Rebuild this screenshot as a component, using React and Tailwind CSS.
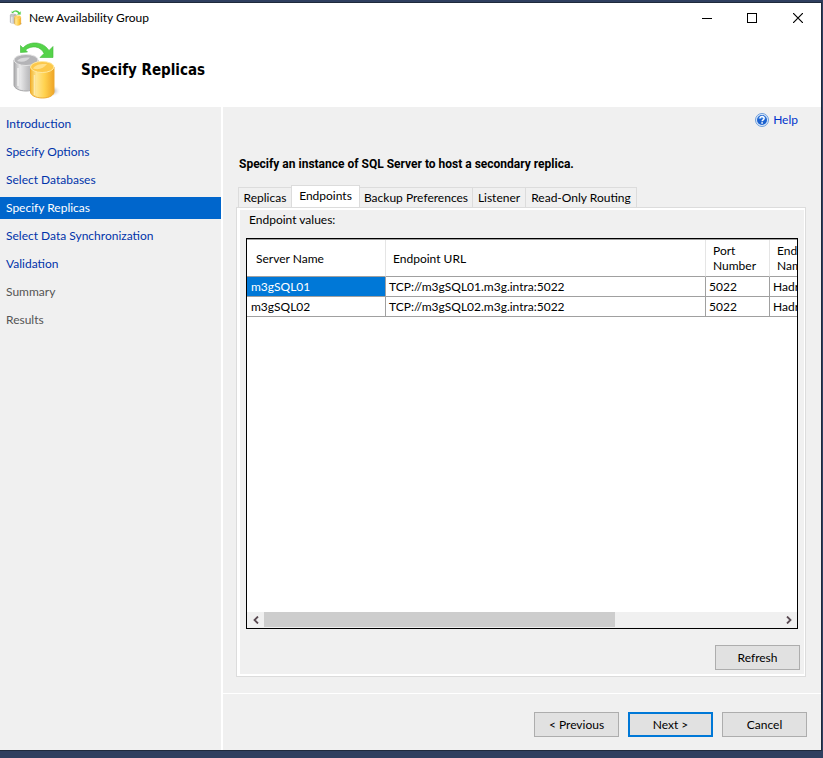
import { useState } from "react";

const steps = [
  { name: "Introduction", enabled: true },
  { name: "Specify Options", enabled: true },
  { name: "Select Databases", enabled: true },
  { name: "Specify Replicas", enabled: true },
  { name: "Select Data Synchronization", enabled: true },
  { name: "Validation", enabled: true },
  { name: "Summary", enabled: false },
  { name: "Results", enabled: false },
];

const tabs = [
  { name: "Replicas", width: "w-[52px]" },
  { name: "Endpoints", width: "w-[67px]" },
  { name: "Backup Preferences", width: "w-[112px]" },
  { name: "Listener", width: "w-[52px]" },
  { name: "Read-Only Routing", width: "w-[110px]" },
];

const endpoints = [
  { server: "m3gSQL01", url: "TCP://m3gSQL01.m3g.intra:5022", port: 5022, name: "Hadr_endpoint" },
  { server: "m3gSQL02", url: "TCP://m3gSQL02.m3g.intra:5022", port: 5022, name: "Hadr_endpoint" },
];

function DatabaseIcon({ id, className }) {
  return (
    <svg viewBox="12 41 48 59" className={className} aria-hidden="true">
      <defs>
        <linearGradient id={id + "-gray"} x1="0" x2="1">
          <stop offset="0" stopColor="#a9a9ab" />
          <stop offset="0.25" stopColor="#e9e9ea" />
          <stop offset="0.55" stopColor="#c4c4c6" />
          <stop offset="1" stopColor="#98989a" />
        </linearGradient>
        <linearGradient id={id + "-gold"} x1="0" x2="1">
          <stop offset="0" stopColor="#f2b632" />
          <stop offset="0.25" stopColor="#ffe692" />
          <stop offset="0.6" stopColor="#ffd24f" />
          <stop offset="1" stopColor="#efa527" />
        </linearGradient>
        <radialGradient id={id + "-shadow"}>
          <stop offset="0" stopColor="#8d8d96" />
          <stop offset="1" stopColor="#ffffff" stopOpacity="0" />
        </radialGradient>
      </defs>
      <ellipse cx="52" cy="91" rx="9" ry="6" fill={`url(#${id}-shadow)`} />
      <path d="M14 60v25c0 3 5 6 12 6s12-3 12-6V60z" fill={`url(#${id}-gray)`} stroke="#a6a6a8" />
      <ellipse cx="26" cy="60" rx="12" ry="5.5" fill="#b4b4b7" stroke="#e4e4e4" />
      <path d="M17 61c2-3 7-4 13-3.500-2 3-7 5.500-13 3.500z" fill="#d8d8da" />
      <path d="M18 68v18" stroke="#ffffff" strokeWidth="1.5" opacity="0.7" />
      <path d="M30.5 67v25c0 3 5 6 12 6s11.500-3 11.500-6V67z" fill={`url(#${id}-gold)`} stroke="#eda92e" />
      <ellipse cx="42.200" cy="67" rx="11.700" ry="5.500" fill="#fcc84a" stroke="#ffe9a0" />
      <path d="M33 68.500c2-4 8-5 14-4.500-3 4-8 6.500-14 4.500z" fill="#ffe08a" />
      <path d="M34.500 75v20" stroke="#fff3c4" strokeWidth="1.500" opacity="0.7" />
      <path
        d="M20.500 45.500v7l7-.5-2-2c3-2.500 6.500-3.500 10-3 4 .5 7 3 8.500 6.500L40 57.500h13V46.500l-4 4C45 44.500 39 42.500 33 43c-4.500.5-8 2.500-10 5z"
        fill="#55d34a"
        stroke="#3fbb38"
        strokeWidth="0.600"
      />
    </svg>
  );
}

function HelpIcon() {
  return (
    <svg viewBox="0 0 14 14" className="size-3.5" aria-hidden="true">
      <circle cx="7" cy="7" r="6.500" fill="#dbe9fa" stroke="#6d9ddb" />
      <circle cx="7" cy="7" r="5" fill="#1c62cf" />
      <path d="M3 5.500a4.300 4.300 0 0 1 8 0" fill="#5597ea" />
      <path d="M5 5.500c0-2.700 4.200-2.500 4.100 0 0 1.400-2 1.500-2 2.800" fill="none" stroke="#fff" strokeWidth="1.500" />
      <rect x="6.300" y="9.200" width="1.600" height="1.500" fill="#fff" />
    </svg>
  );
}

function Button({ children, primary }) {
  return (
    <button
      className={
        primary
          ? "h-[25px] w-[85px] border-2 border-[#0078d7] bg-[#e1e1e1]"
          : "h-[25px] w-[85px] border border-[#adadad] bg-[#e1e1e1]"
      }
    >
      {children}
    </button>
  );
}

function Tab({ name, width, active, onClick }) {
  return (
    <button
      role="tab"
      aria-selected={active}
      onClick={onClick}
      className={
        (active ? "-mb-px -ml-px h-5 border-l bg-white pb-0.5 " : "h-[19px] first:border-l ") +
        "box-content shrink-0 border-t border-r border-[#dcdcdc] whitespace-nowrap " +
        width
      }
    >
      {name}
    </button>
  );
}

function App() {
  const [step, setStep] = useState("Specify Replicas");
  const [tab, setTab] = useState("Endpoints");
  const [selected, setSelected] = useState("m3gSQL01");

  return (
    <div className="flex min-h-screen flex-col bg-[#2f3f5f] pt-0.5 pr-px pb-[7px] font-['Lato',sans-serif] text-xs leading-4 text-black">
      <div className="flex flex-1 flex-col border-y border-r border-[#1f2a3c] bg-[#f0f0f0]">

        {/* Title bar */}
        <header className="bg-white">
          <div className="flex h-[30px] items-center pl-2">
            <DatabaseIcon id="small" className="size-4" />
            <span className="ml-[5px] flex-1">New Availability Group</span>

            <button aria-label="Minimize" className="flex h-7 w-[45px] items-center justify-center">
              <svg viewBox="0 0 10 10" className="size-2.5" shapeRendering="crispEdges">
                <path d="M0 5.500h10" stroke="#000" />
              </svg>
            </button>
            <button aria-label="Maximize" className="flex h-7 w-[45px] items-center justify-center">
              <svg viewBox="0 0 10 10" className="size-2.5" shapeRendering="crispEdges">
                <path d="M.5.5h9v9h-9z" fill="none" stroke="#000" />
              </svg>
            </button>
            <button aria-label="Close" className="flex h-7 w-[47px] items-center justify-center">
              <svg viewBox="0 0 10 10" className="size-2.5">
                <path d="M0 0l10 10M10 0L0 10" stroke="#000" strokeWidth="1.200" />
              </svg>
            </button>
          </div>

          <div className="flex h-[74px] items-center pl-3">
            <DatabaseIcon id="large" className="h-[59px] w-12" />
            <h1 className="ml-[21px] font-['DejaVu_Sans_Condensed','DejaVu_Sans',sans-serif] text-[15px] font-bold">
              Specify Replicas
            </h1>
          </div>
        </header>

        <div className="flex flex-1">

          {/* Wizard steps */}
          <nav className="flex w-[223px] shrink-0 flex-col gap-1.5 border-r-2 border-white pt-1.5">
            {steps.map((s) => (
              <button
                key={s.name}
                disabled={!s.enabled}
                onClick={() => setStep(s.name)}
                className={
                  s.name === step
                    ? "h-[22px] bg-[#0066cc] pl-1.5 text-left text-white"
                    : s.enabled
                      ? "h-[22px] pl-1.5 text-left text-[#0033aa]"
                      : "h-[22px] pl-1.5 text-left text-[#555555]"
                }
              >
                {s.name}
              </button>
            ))}
          </nav>

          <div className="flex min-w-0 flex-1 flex-col">

            <main className="flex flex-1 flex-col pt-[5px] pr-[15px] pb-4 pl-[13px]">
              <a href="#help" className="flex items-center gap-1 self-end pr-2 text-[#0033cc]">
                <HelpIcon />
                Help
              </a>

              <h2 className="mt-7 pl-[3px] font-['Roboto',sans-serif] font-bold">
                Specify an instance of SQL Server to host a secondary replica.
              </h2>

              {/* Tabs */}
              <div role="tablist" className="mt-[13px] flex h-[22px] items-end pl-0.5">
                {tabs.map((t) => (
                  <Tab
                    key={t.name}
                    name={t.name}
                    width={t.width}
                    active={t.name === tab}
                    onClick={() => setTab(t.name)}
                  />
                ))}
              </div>

              <div className="flex flex-1 flex-col border border-[#dcdcdc] bg-white pt-0.5 pr-px pb-0.5 pl-[3px]">
                <div className="flex flex-1 flex-col bg-[#f0f0f0] pt-0.5 pr-1 pb-1 pl-1.5">
                  <p className="pl-[3px]">Endpoint values:</p>

                  {/* Endpoints grid */}
                  <div className="mt-2.5 mr-0.5 flex flex-1 flex-col overflow-hidden border border-black bg-white">
                    <div className="flex-1 overflow-hidden border-t border-[#a0a0a0]">
                      <table className="w-[640px] table-fixed border-separate border-spacing-0 text-left">
                        <thead>
                          <tr className="h-[37px]">
                            <th className="w-[139px] border-r border-b border-r-[#e5e5e5] border-b-[#a0a0a0] px-[9px] pt-0.5 font-normal">
                              Server Name
                            </th>
                            <th className="w-[320px] border-r border-b border-r-[#e5e5e5] border-b-[#a0a0a0] px-[7px] pt-0.5 font-normal">
                              Endpoint URL
                            </th>
                            <th className="w-16 border-r border-b border-r-[#e5e5e5] border-b-[#a0a0a0] px-[7px] leading-[15px] font-normal">
                              Port Number
                            </th>
                            <th className="border-b border-b-[#a0a0a0] px-[7px] leading-[15px] font-normal">
                              Endpoint
                              <br />
                              Name
                            </th>
                          </tr>
                        </thead>
                        <tbody>
                          {endpoints.map((row) => (
                            <tr key={row.server} className="h-5" onClick={() => setSelected(row.server)}>
                              <td
                                className={
                                  row.server === selected
                                    ? "border-r border-b border-[#a0a0a0] bg-[#0078d7] px-1 text-white"
                                    : "border-r border-b border-[#a0a0a0] px-1"
                                }
                              >
                                {row.server}
                              </td>
                              <td className="border-r border-b border-[#a0a0a0] px-[3px]">{row.url}</td>
                              <td className="border-r border-b border-[#a0a0a0] px-[3px]">{row.port}</td>
                              <td className="border-b border-[#a0a0a0] px-[3px]">{row.name}</td>
                            </tr>
                          ))}
                        </tbody>
                      </table>
                    </div>

                    {/* Horizontal scrollbar */}
                    <div className="flex h-4 bg-[#f0f0f0]">
                      <button aria-label="Scroll left" className="flex w-[17px] items-center justify-center">
                        <svg viewBox="0 0 6 8" className="h-2 w-1.5">
                          <path d="M5 .5L1.500 4 5 7.500" fill="none" stroke="#5a4a52" strokeWidth="1.800" />
                        </svg>
                      </button>
                      <div className="flex-1 pb-px">
                        <div className="h-full w-[68%] bg-[#cdcdcd]" />
                      </div>
                      <button aria-label="Scroll right" className="flex w-[17px] items-center justify-center">
                        <svg viewBox="0 0 6 8" className="h-2 w-1.5">
                          <path d="M1 .5L4.500 4 1 7.500" fill="none" stroke="#5a4a52" strokeWidth="1.800" />
                        </svg>
                      </button>
                    </div>
                  </div>

                  <div className="mt-4 flex justify-end">
                    <Button>Refresh</Button>
                  </div>
                </div>
              </div>
            </main>

            <footer className="flex justify-end gap-[9px] border-t border-white pt-[18px] pr-3.5 pb-[13px]">
              <Button>&lt; Previous</Button>
              <Button primary>Next &gt;</Button>
              <Button>Cancel</Button>
            </footer>
          </div>
        </div>
      </div>
    </div>
  );
}

export default App;
